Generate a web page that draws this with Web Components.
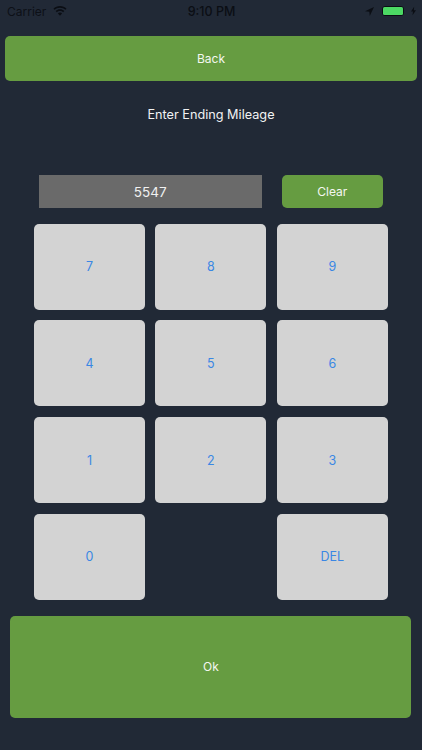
<!DOCTYPE html>
<html lang="en">
<head>
<meta charset="utf-8">
<title>Enter Ending Mileage</title>
<style>
  html, body { margin: 0; padding: 0; background: #212936; }
  body { width: 422px; height: 750px; overflow: hidden; font-family: Inter, "Liberation Sans", sans-serif; }
</style>
</head>
<body>
<mileage-screen></mileage-screen>
<script>
class StatusBar extends HTMLElement {
  constructor() {
    super();
    this.attachShadow({ mode: "open" });
    this.shadowRoot.innerHTML = `
    <style>
      :host {
        display: grid;
        grid-template-columns: 1fr auto 1fr;
        align-items: center;
        height: 22px;
        padding: 0 6px 0 7px;
        color: #0b0e14;
        font-size: 12px;
      }
      .left { display: flex; align-items: center; gap: 7px; color: #0d1017; }
      .time { font-weight: 500; font-size: 12.5px; }
      .right { display: flex; align-items: center; justify-content: flex-end; gap: 7px; }
      svg { display: block; }
      .arrow { margin-right: 1px; }
      .battery {
        box-sizing: border-box;
        width: 22px;
        height: 10px;
        border: 1px solid #0b0e14;
        border-radius: 3px;
      }
      .battery div { height: 100%; background: #4cd964; border-radius: 1.5px; }
    </style>
    <div class="left">
      <span>Carrier</span>
      <svg width="14" height="10" viewBox="0 0 15 11" fill="#0b0e14">
        <path d="M7.5 0C4.7 0 2.2 1.1.3 2.9l1.2 1.3C3 2.7 5.2 1.8 7.5 1.8s4.500.9 6 2.400l1.200-1.300C12.800 1.100 10.300 0 7.500 0z"/>
        <path d="M7.500 3.600c-1.800 0-3.500.7-4.700 1.900l1.200 1.300c.9-.9 2.200-1.400 3.500-1.400s2.600.5 3.500 1.400l1.200-1.300C11 4.300 9.300 3.600 7.500 3.600z"/>
        <path d="M7.500 7.200c-.9 0-1.700.4-2.300 1l2.300 2.600 2.300-2.600c-.6-.6-1.400-1-2.300-1z"/>
      </svg>
    </div>
    <span class="time">9:10 PM</span>
    <div class="right">
      <svg class="arrow" width="9" height="9" viewBox="0 0 11 11" fill="#0b0e14"><path d="M11 0L0 5.200l5.300.5.500 5.300z"/></svg>
      <div class="battery"><div></div></div>
      <svg width="5" height="10" viewBox="0 0 6 10" fill="#0b0e14"><path d="M3.800 0L0 5.700h2.400L1.800 10 6 4H3.400z"/></svg>
    </div>`;
  }
}

class GreenButton extends HTMLElement {
  constructor() {
    super();
    this.attachShadow({ mode: "open" });
    this.shadowRoot.innerHTML = `
    <style>
      :host {
        display: flex;
        align-items: center;
        justify-content: center;
        background: #669c41;
        color: #f4f7f0;
        border-radius: 5px;
        font-size: 12px;
        cursor: pointer;
      }
    </style>
    <slot></slot>`;
  }
}

class KeyButton extends HTMLElement {
  constructor() {
    super();
    this.attachShadow({ mode: "open" });
    this.shadowRoot.innerHTML = `
    <style>
      :host {
        display: flex;
        align-items: center;
        justify-content: center;
        background: #d3d3d3;
        color: #3a87e4;
        border-radius: 5px;
        font-size: 12.5px;
        cursor: pointer;
      }
    </style>
    <slot></slot>`;
  }
}

class KeyPad extends HTMLElement {
  constructor() {
    super();
    this.attachShadow({ mode: "open" });
    this.shadowRoot.innerHTML = `
    <style>
      :host {
        display: grid;
        grid-template-columns: repeat(3, 111px);
        grid-auto-rows: 86px;
        column-gap: 10.400px;
        row-gap: 10.800px;
        margin: 15.500px 34px 0;
      }
      .blank { visibility: hidden; }
    </style>
    <key-button>7</key-button>
    <key-button>8</key-button>
    <key-button>9</key-button>
    <key-button>4</key-button>
    <key-button>5</key-button>
    <key-button>6</key-button>
    <key-button>1</key-button>
    <key-button>2</key-button>
    <key-button>3</key-button>
    <key-button>0</key-button>
    <div class="blank"></div>
    <key-button>DEL</key-button>`;
  }
}

class MileageScreen extends HTMLElement {
  constructor() {
    super();
    this.attachShadow({ mode: "open" });
    this.shadowRoot.innerHTML = `
    <style>
      :host {
        display: block;
        width: 422px;
        height: 750px;
        background: #212936;
      }
      .back { height: 44.500px; margin: 14px 5px 0; }
      h1 {
        margin: 24px 0 0;
        height: 20px;
        line-height: 20px;
        text-align: center;
        color: #f1f2f3;
        font-size: 12.700px;
        font-weight: 400;
      }
      .entry {
        display: flex;
        gap: 20.500px;
        height: 33px;
        margin: 50.500px 39.500px 0 39px;
      }
      .value {
        flex: 1;
        display: flex;
        align-items: center;
        justify-content: center;
        background: #6a6a6a;
        color: #f1f1f1;
        font-size: 13.500px;
      }
      .clear { width: 100.500px; }
      .ok { height: 102px; margin: 16px 10.600px 0 10.400px; }
    </style>
    <status-bar></status-bar>
    <green-button class="back">Back</green-button>
    <h1>Enter Ending Mileage</h1>
    <div class="entry">
      <div class="value">5547</div>
      <green-button class="clear">Clear</green-button>
    </div>
    <key-pad></key-pad>
    <green-button class="ok">Ok</green-button>`;
  }
}

customElements.define("status-bar", StatusBar);
customElements.define("green-button", GreenButton);
customElements.define("key-button", KeyButton);
customElements.define("key-pad", KeyPad);
customElements.define("mileage-screen", MileageScreen);
</script>
</body>
</html>
